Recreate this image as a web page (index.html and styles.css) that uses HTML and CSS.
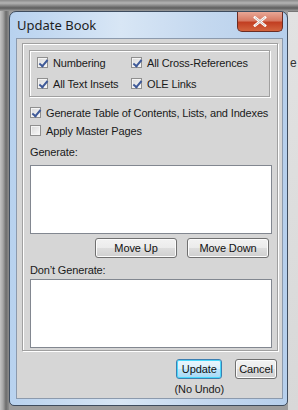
FILE: index.html
```html
<!DOCTYPE html>
<html>
<head>
    <title>Update Book</title>
    <link rel="stylesheet" href="styles.css">
</head>
<body>
    <div class="desk">
        <div class="left-edge"></div>
        <div class="window">
            <div class="titlebar">
                <span class="title">Update Book</span>
                <span class="close">
                    <svg width="14" height="11" viewBox="0 0 14 11">
                        <path d="M2 1.5 L12 9.5 M12 1.5 L2 9.5" stroke="#fff" stroke-width="2.6" stroke-linecap="square"/>
                        <path d="M2 1.5 L12 9.5 M12 1.5 L2 9.5" stroke="#4a2a22" stroke-width="0.6" opacity="0.5"/>
                    </svg>
                </span>
            </div>
            <div class="content">
                <div class="group">
                    <div class="inset">
                        <div class="opts">
                            <label class="check"><span class="box on"></span>Numbering</label>
                            <label class="check"><span class="box on"></span>All Cross-References</label>
                            <label class="check"><span class="box on"></span>All Text Insets</label>
                            <label class="check"><span class="box on"></span>OLE Links</label>
                        </div>
                    </div>
                    <label class="check wide first"><span class="box on"></span>Generate Table of Contents, Lists, and Indexes</label>
                    <label class="check wide"><span class="box"></span>Apply Master Pages</label>

                    <div class="caption gen">Generate:</div>
                    <div class="list"></div>
                    <div class="moves">
                        <button class="btn move">Move Up</button>
                        <button class="btn move">Move Down</button>
                    </div>
                    <div class="caption dont">Don&#8217;t Generate:</div>
                    <div class="list second"></div>
                </div>
                <div class="actions">
                    <div class="update-col">
                        <button class="btn default">Update</button>
                        <span class="note">(No Undo)</span>
                    </div>
                    <button class="btn cancel">Cancel</button>
                </div>
            </div>
        </div>
        <div class="right-edge"><span>e</span></div>
    </div>
</body>
</html>
```

FILE: styles.css
```css
* {
    box-sizing: border-box;
}

body {
    margin: 0;
    padding: 0;
    width: 298px;
    height: 410px;
    overflow: hidden;
    background: #9c9c9c;
    font-family: "Liberation Sans", Arial, sans-serif;
    font-size: 11px;
    letter-spacing: -0.15px;
    color: #1a1a1a;
}

.desk {
    display: flex;
    height: 410px;
    background: linear-gradient(#8a8a8a 0, #b4b4b4 3px, #5e5e5e 8px, #9c9c9c 11px);
}

.left-edge {
    width: 9px;
    flex: none;
    background: linear-gradient(to right, #c4c4c4 0, #a6a6a6 3px, #6c6c6c 6px, #8e8e8e 9px);
    margin-top: 11px;
}

.right-edge {
    flex: 1;
    margin-top: 11px;
    background: linear-gradient(#e2e2e2, #d8d8d8);
    border-top: 1px solid #777;
    overflow: hidden;
    font-size: 12px;
    color: #333;
}

.right-edge span {
    display: block;
    margin-top: 44px;
    margin-left: 2px;
}

.window {
    width: 279px;
    height: 395px;
    flex: none;
    margin-top: 11px;
    border: 1px solid #3e4c5e;
    border-radius: 7px 7px 5px 5px;
    background: linear-gradient(to right, #b8d2ef, #d8e6f5 40%, #c4d8ef 70%, #b6cfec);
    padding: 0 4px 6px 6px;
    display: flex;
    flex-direction: column;
}

.titlebar {
    height: 26px;
    display: flex;
    align-items: flex-start;
    justify-content: space-between;
}

.title {
    font-family: "Noto Sans", sans-serif;
    font-size: 13px;
    letter-spacing: 0;
    margin-top: 4px;
    margin-left: 1px;
    color: #1e1e1e;
}

.close {
    width: 46px;
    height: 20px;
    margin-right: 0;
    border: 1px solid #6b2d24;
    border-top: none;
    border-radius: 0 0 5px 5px;
    background: linear-gradient(#e8a796 0, #d77a63 45%, #c23f22 55%, #d3643e 100%);
    display: flex;
    align-items: center;
    justify-content: center;
}

.content {
    flex: 1;
    min-width: 0;
    background: #d6d6d6;
    border: 1px solid #8c9aad;
    padding: 4px 4px 0 5px;
    display: flex;
    flex-direction: column;
}

.group {
    min-width: 0;
    border: 1px solid #a0a0a0;
    box-shadow: inset 1px 1px 0 #fff, 1px 1px 0 #fff;
    padding: 6px 5px 2px 7px;
    height: 308px;
    flex: none;
}

.inset {
    border: 1px solid #a0a0a0;
    box-shadow: inset 1px 1px 0 #fff, 1px 1px 0 #fff;
    padding: 5px 6px 6px 7px;
    margin-left: -1px;
    margin-right: 2px;
}

.opts {
    display: grid;
    grid-template-columns: 94px auto;
    row-gap: 8px;
}

.check {
    display: flex;
    align-items: center;
    height: 13px;
    white-space: nowrap;
}

.box {
    width: 11px;
    height: 11px;
    border: 1px solid #8f8f8f;
    background: linear-gradient(135deg, #d8d8d8, #fafafa);
    box-shadow: inset 0 0 0 1px #f4f4f4;
    margin-right: 5px;
    position: relative;
    flex: none;
}

.box.on::after {
    content: "";
    position: absolute;
    left: 3px;
    top: 0;
    width: 3px;
    height: 7px;
    border: solid #3f5a98;
    border-width: 0 2px 2px 0;
    transform: rotate(40deg);
}

.wide {
    margin-top: 5px;
}

.wide.first {
    margin-top: 9px;
}

.caption {
    height: 13px;
    line-height: 13px;
}

.gen {
    margin-top: 9px;
}

.dont {
    margin-top: 6px;
}

.list {
    background: #fff;
    border: 1px solid #828790;
    height: 69px;
    margin-top: 6px;
}

.list.second {
    margin-top: 2px;
}

.moves {
    display: flex;
    justify-content: flex-end;
    gap: 10px;
    margin-top: 4px;
    margin-right: 3px;
}

.btn {
    font-family: "Liberation Sans", Arial, sans-serif;
    font-size: 11px;
    letter-spacing: -0.1px;
    color: #111;
    border: 1px solid #707070;
    border-radius: 3px;
    background: linear-gradient(#f2f2f2 0, #ebebeb 50%, #dddddd 51%, #cfcfcf 100%);
    box-shadow: inset 0 0 0 1px #fcfcfc;
    padding: 0;
    height: 20px;
}

.move {
    width: 82px;
}

.actions {
    display: flex;
    justify-content: flex-end;
    align-items: flex-start;
    gap: 11px;
    margin-top: 8px;
    margin-right: 1px;
}

.update-col {
    display: flex;
    flex-direction: column;
    align-items: center;
}

.default {
    width: 46px;
    border-color: #3c7fb1;
    background: linear-gradient(#eaf6fd 0, #d9f0fc 50%, #bee6fd 51%, #a7d9f5 100%);
    box-shadow: inset 0 0 0 1px #48d8fb;
}

.cancel {
    width: 42px;
}

.note {
    margin-top: 4px;
    line-height: 13px;
}
```
